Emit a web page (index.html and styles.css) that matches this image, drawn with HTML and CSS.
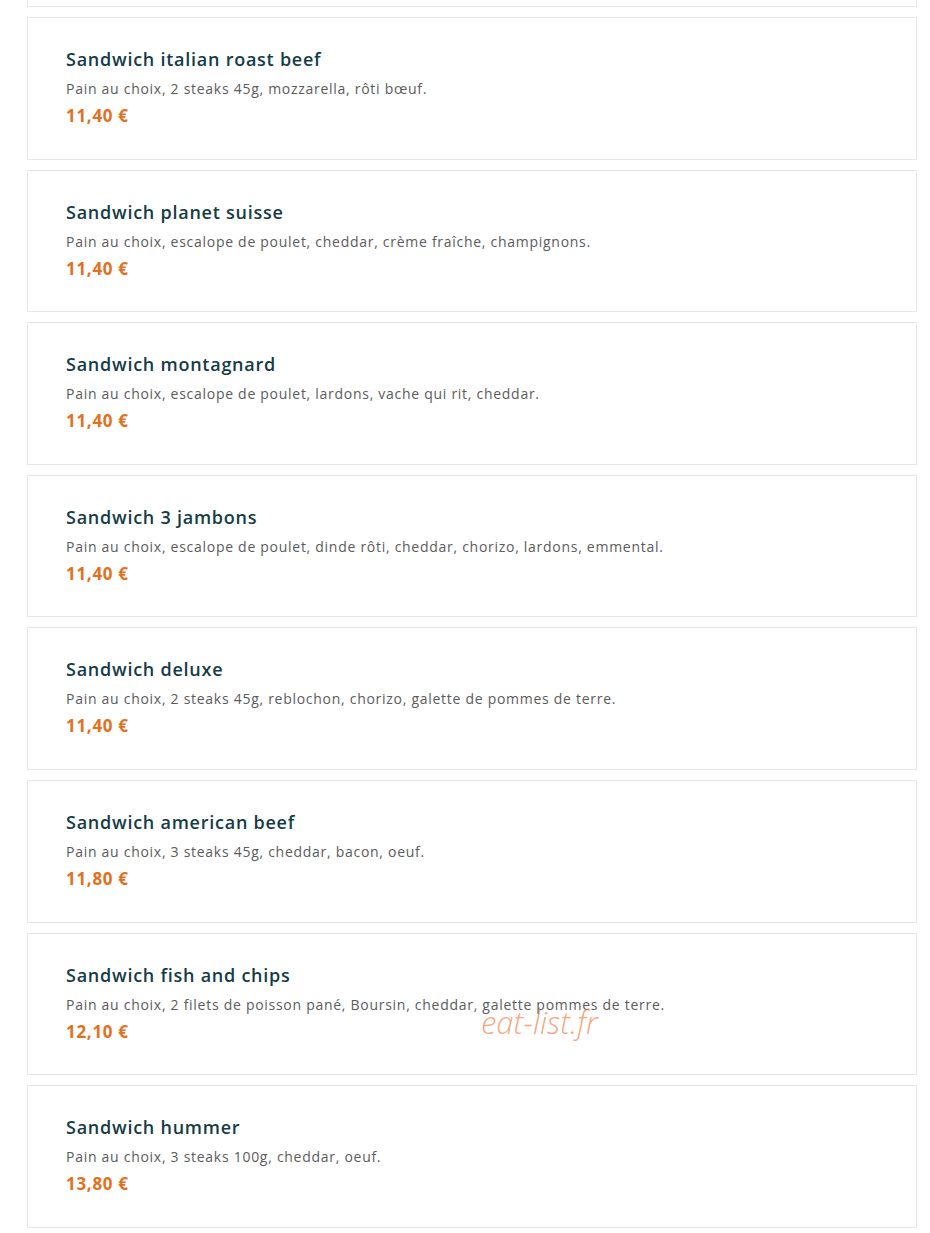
FILE: index.html
```html
<!DOCTYPE html>
<html lang="fr">
<head>
  <meta charset="UTF-8">
  <title>Sandwichs | Menu</title>
  <link rel="stylesheet" href="styles.css">
</head>
<body>

  <!-- Menu list -->
  <div class="menu-list">
    <div class="dish"></div>
    <div class="dish">
      <h3>Sandwich italian roast beef</h3>
      <p>Pain au choix, 2 steaks 45g, mozzarella, rôti bœuf.</p>
      <span class="price">11,40 €</span>
    </div>
    <div class="dish">
      <h3>Sandwich planet suisse</h3>
      <p>Pain au choix, escalope de poulet, cheddar, crème fraîche, champignons.</p>
      <span class="price">11,40 €</span>
    </div>
    <div class="dish">
      <h3>Sandwich montagnard</h3>
      <p>Pain au choix, escalope de poulet, lardons, vache qui rit, cheddar.</p>
      <span class="price">11,40 €</span>
    </div>
    <div class="dish">
      <h3>Sandwich 3 jambons</h3>
      <p>Pain au choix, escalope de poulet, dinde rôti, cheddar, chorizo, lardons, emmental.</p>
      <span class="price">11,40 €</span>
    </div>
    <div class="dish">
      <h3>Sandwich deluxe</h3>
      <p>Pain au choix, 2 steaks 45g, reblochon, chorizo, galette de pommes de terre.</p>
      <span class="price">11,40 €</span>
    </div>
    <div class="dish">
      <h3>Sandwich american beef</h3>
      <p>Pain au choix, 3 steaks 45g, cheddar, bacon, oeuf.</p>
      <span class="price">11,80 €</span>
    </div>
    <div class="dish">
      <h3>Sandwich fish and chips</h3>
      <p>Pain au choix, 2 filets de poisson pané, Boursin, cheddar, galette pommes de terre.</p>
      <span class="price">12,10 €</span>
      <span class="watermark">eat-list.fr</span>
    </div>
    <div class="dish">
      <h3>Sandwich hummer</h3>
      <p>Pain au choix, 3 steaks 100g, cheddar, oeuf.</p>
      <span class="price">13,80 €</span>
    </div>
  </div>

</body>
</html>
```

FILE: styles.css
```css
body {
  margin: 0;
  font-family: "Open Sans", Arial, sans-serif;
  background-color: #ffffff;
  overflow: hidden;
}

.menu-list {
  display: flex;
  flex-direction: column;
  gap: 10px;
  margin: -135.6px 0 0 27px;
  width: 890px;
}

.dish {
  position: relative;
  display: flex;
  flex-direction: column;
  align-items: flex-start;
  box-sizing: border-box;
  height: 142.6px;
  flex-shrink: 0;
  padding: 30px 38px 0;
  border: 1px solid #e6e6e6;
  background-color: #ffffff;
}

.dish h3 {
  margin: 0;
  font-size: 18px;
  line-height: 22px;
  font-weight: 600;
  letter-spacing: 0.75px;
  color: #153c46;
}

.dish p {
  margin: 9px 0 0;
  font-size: 14px;
  line-height: 20px;
  letter-spacing: 0.72px;
  color: #5b5b5b;
}

.price {
  margin-top: 6px;
  font-size: 17px;
  line-height: 22px;
  font-weight: 700;
  letter-spacing: 0.7px;
  color: #e2711d;
}

.watermark {
  position: absolute;
  left: 453px;
  top: 67px;
  font-size: 31px;
  font-style: italic;
  font-weight: 300;
  color: rgba(238, 128, 70, 0.7);
}
```
